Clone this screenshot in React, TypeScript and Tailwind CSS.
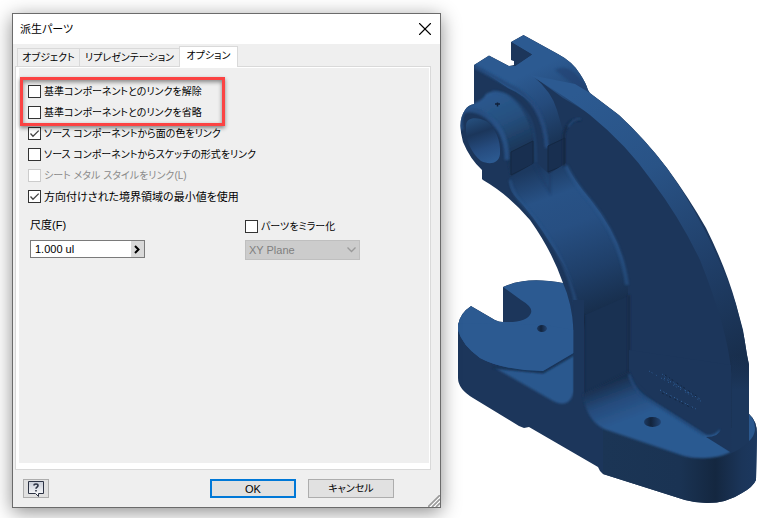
import { useState } from "react";
import { X } from "lucide-react";

const tabs = [
  { label: "オブジェクト", width: "w-[62px]" },
  { label: "リプレゼンテーション", width: "w-[100px]" },
  { label: "オプション", width: "w-[59px]" },
];

const options = [
  { label: "基準コンポーネントとのリンクを解除", checked: false },
  { label: "基準コンポーネントとのリンクを省略", checked: false },
  { label: "ソース コンポーネントから面の色をリンク", checked: true },
  { label: "ソース コンポーネントからスケッチの形式をリンク", checked: false },
  { label: "シート メタル スタイルをリンク(L)", checked: false, disabled: true },
  { label: "方向付けされた境界領域の最小値を使用", checked: true, size: "text-[11px]" },
];

type CheckProps = { label: string; checked?: boolean; disabled?: boolean; size?: string };

function Check({ label, checked = false, disabled = false, size = "text-[10px]" }: CheckProps) {
  return (
    <label
      className={`flex h-[21px] items-center gap-[3px] whitespace-nowrap ${size} ${disabled ? "text-[#8a8a8a]" : "text-black"}`}
    >
      <span className="grid shrink-0">
        <input
          type="checkbox"
          defaultChecked={checked}
          disabled={disabled}
          className="peer col-start-1 row-start-1 size-[13px] appearance-none border border-[#333] bg-white disabled:border-[#ccc]"
        />
        <svg
          viewBox="0 0 13 13"
          className="pointer-events-none invisible col-start-1 row-start-1 size-[13px] peer-checked:visible"
          aria-hidden="true"
        >
          <path d="M2.5 6.5 5 9.3l5.7-5.7" fill="none" stroke="#444" strokeWidth="1.3" />
        </svg>
      </span>
      {label}
    </label>
  );
}

function HelpIcon() {
  return (
    <svg viewBox="0 0 16 16" className="size-4" aria-hidden="true">
      <defs>
        <linearGradient id="bubble" x1="0" y1="0" x2="0" y2="1">
          <stop offset="0" stopColor="#c8cdd8" />
          <stop offset="1" stopColor="#fff" />
        </linearGradient>
      </defs>
      <path d="M.5.5h15v12h-5v3l-3-3h-7z" fill="url(#bubble)" stroke="#2c3344" />
      <path d="M6 4.5c0-2 4-2 4 0 0 1.6-2 1.6-2 3.3M8 9v1.6" fill="none" stroke="#2c3344" strokeWidth="1.6" />
    </svg>
  );
}

function Dialog() {
  const [active, setActive] = useState(2);

  return (
    <section
      role="dialog"
      aria-labelledby="dialog-title"
      className="relative flex min-w-[400px] flex-1 flex-col border border-[#6b6b6b] bg-[#efefef] text-black shadow-[0_4px_18px_rgba(0,0,0,0.45)]"
    >
      <header className="flex h-[30px] shrink-0 items-center justify-between bg-white pr-1 pl-[7px]">
        <h1 id="dialog-title">派生パーツ</h1>
        <button aria-label="閉じる">
          <X size={22} strokeWidth={1.2} />
        </button>
      </header>

      <div role="tablist" className="z-10 -mb-px ml-1 flex h-[23px] shrink-0 items-end text-[10px]">
        {tabs.map((tab, i) => (
          <button
            key={tab.label}
            role="tab"
            aria-selected={active === i}
            onClick={() => setActive(i)}
            className={`${tab.width} border-t border-l border-[#d9d9d9] whitespace-nowrap last:border-r ${
              active === i ? "h-[21px] bg-white pb-0.5" : "mb-px h-[18px]"
            }`}
          >
            {tab.label}
          </button>
        ))}
      </div>

      <div className="mr-[9px] ml-0.5 flex flex-1 border border-[#d9d9d9] bg-white pt-px pr-px pb-1.5 pl-[3px]">
        <div className="relative flex-1 bg-[#efefef] pt-[13px] pl-[9px]">
          {options.map((option) => (
            <Check key={option.label} {...option} />
          ))}
          <div className="mt-[9px] grid grid-cols-[215px_1fr] gap-y-[3px] pl-0.5">
            <label htmlFor="scale" className="flex h-[18px] items-center">尺度(F)</label>
            <Check label="パーツをミラー化" />
            <div className="flex h-[18px] w-[115px] border border-[#7a7a7a] bg-white">
              <input id="scale" defaultValue="1.000 ul" className="min-w-0 flex-1 px-1 outline-none" />
              <button aria-label="値の候補" className="flex w-[13px] items-center justify-center bg-[#d9d9d9]">
                <svg viewBox="0 0 7 9" className="h-[9px] w-[7px]" aria-hidden="true">
                  <path d="M1 1l3.5 3.5L1 8" fill="none" stroke="#000" strokeWidth="2" />
                </svg>
              </button>
            </div>
            <div className="grid w-[115px]">
              <select
                disabled
                aria-label="ミラー平面"
                className="col-start-1 row-start-1 h-5 appearance-none border border-[#bfbfbf] bg-[#ccc] px-[3px] text-[#7f7f7f] opacity-100"
              >
                <option>XY Plane</option>
              </select>
              <svg
                viewBox="0 0 9 6"
                className="pointer-events-none col-start-1 row-start-1 mr-1 h-1.5 w-[9px] self-center justify-self-end"
                aria-hidden="true"
              >
                <path d="M.5.5l4 4 4-4" fill="none" stroke="#9a9a9a" strokeWidth="1.3" />
              </svg>
            </div>
          </div>
          <div className="pointer-events-none absolute top-[9px] left-px h-[49px] w-[205px] border-3 border-[#fb4343] shadow-[0_2px_4px_rgba(0,0,0,0.45),inset_0_2px_4px_rgba(0,0,0,0.45)]" />
        </div>
      </div>

      <footer className="flex shrink-0 items-center gap-3 py-[9px] pr-[46px] pl-2.5">
        <button aria-label="ヘルプ" className="mr-auto flex h-[19px] w-[26px] items-center justify-center border border-[#adadad] bg-[#e1e1e1]">
          <HelpIcon />
        </button>
        <button className="h-[19px] w-[86px] border-2 border-[#0078d7] bg-[#e1e1e1] leading-[14px]">OK</button>
        <button className="h-[19px] w-[86px] border border-[#adadad] bg-[#e1e1e1] text-[10px] leading-4">キャンセル</button>
      </footer>
      <svg viewBox="0 0 12 12" className="absolute right-0 bottom-0 size-3" aria-hidden="true">
        <path d="M0 12 12 0M4 12l8-8M8 12l4-4" stroke="#9b9b9b" strokeWidth="1.6" />
        <path d="M2 12 12 2M6 12l6-6" stroke="#fff" strokeWidth="1" />
      </svg>
    </section>
  );
}

function Bracket() {
  return (
    <svg viewBox="457 34 300 470" className="mt-[21px] w-[300px] shrink-0 self-start" role="img" aria-label="ブラケットの3Dモデル">
      <defs>
        <linearGradient id="rim" gradientUnits="userSpaceOnUse" x1="580" y1="90" x2="745" y2="370">
          <stop offset="0" stopColor="#2c5a91" />
          <stop offset=".32" stopColor="#295386" />
          <stop offset=".65" stopColor="#203f69" />
          <stop offset="1" stopColor="#172c49" />
        </linearGradient>
        <linearGradient id="rimEnd" gradientUnits="userSpaceOnUse" x1="0" y1="355" x2="0" y2="390">
          <stop offset="0" stopColor="#1c375c" stopOpacity="0" />
          <stop offset="1" stopColor="#1c375c" />
        </linearGradient>
        <linearGradient id="web" gradientUnits="userSpaceOnUse" x1="545" y1="165" x2="600" y2="318">
          <stop offset="0" stopColor="#1c3960" />
          <stop offset=".2" stopColor="#285286" />
          <stop offset=".4" stopColor="#274f82" />
          <stop offset=".7" stopColor="#1f3f69" />
          <stop offset="1" stopColor="#162b47" />
        </linearGradient>
        <linearGradient id="collar" gradientUnits="userSpaceOnUse" x1="522" y1="76" x2="556" y2="145">
          <stop offset="0" stopColor="#2c5a91" />
          <stop offset=".45" stopColor="#254b7c" />
          <stop offset="1" stopColor="#193253" />
        </linearGradient>
        <linearGradient id="boss" gradientUnits="userSpaceOnUse" x1="495" y1="92" x2="523" y2="152">
          <stop offset="0" stopColor="#2b588e" />
          <stop offset=".45" stopColor="#26507f" />
          <stop offset="1" stopColor="#193253" />
        </linearGradient>
        <linearGradient id="bore" gradientUnits="userSpaceOnUse" x1="475" y1="116" x2="491" y2="162">
          <stop offset="0" stopColor="#26507f" />
          <stop offset=".35" stopColor="#1b365b" />
          <stop offset=".7" stopColor="#264c7f" />
          <stop offset="1" stopColor="#2c5a91" />
        </linearGradient>
        <linearGradient id="floor" gradientUnits="userSpaceOnUse" x1="600" y1="385" x2="615" y2="425">
          <stop offset="0" stopColor="#182e4d" />
          <stop offset=".5" stopColor="#254b7c" />
          <stop offset="1" stopColor="#2c5a91" />
        </linearGradient>
        <linearGradient id="base" gradientUnits="userSpaceOnUse" x1="603" y1="0" x2="757" y2="0">
          <stop offset="0" stopColor="#1b3555" />
          <stop offset=".5" stopColor="#1a3353" />
          <stop offset=".73" stopColor="#142740" />
          <stop offset=".9" stopColor="#1b3559" />
          <stop offset="1" stopColor="#1c385f" />
        </linearGradient>
        <linearGradient id="shadowHole" x1="0" y1="0" x2="1" y2="0">
          <stop offset="0" stopColor="#1d3a62" />
          <stop offset=".4" stopColor="#12233b" />
          <stop offset="1" stopColor="#224575" />
        </linearGradient>
        <filter id="soft" x="-20%" y="-20%" width="140%" height="140%">
          <feGaussianBlur stdDeviation="1.3" />
        </filter>
        <clipPath id="body">
          <path d="M523.5 35 558 54Q573 62 580 74 586 83 588 90L590 93 619 115Q645 139 667 168 689 198 706 228 726 268 736 304L743 330 747 355 749 365V414Q757 421 757 434L756 480Q753 487 742 493 727 503 707 503 696 503 685 500L603 474 600 471 598 467 529 427 524 428 519 426 473 398Q458 389 458 378V325Q460 313 471 306L495 320Q499 322 503 322V287Q526 276 563 283 552 251 530 220 509 195 483 180L482 179V170Q470 159 463 142 457 121 465 110 468 105 474 104V65L489 55.5 509 66 514 65V61L511 60V42Z" />
        </clipPath>
      </defs>

      <g clipPath="url(#body)">
        <rect x="457" y="34" width="300" height="470" fill="#1c365b" />

        {/* top of the lug and collar */}
        <path d="M474 65 489 55.5 509 66 515 66 532 54.500 511 42 523.5 35 558 54Q580 63 589 92L600 120 563 98 533 76Q552 92 557 110L565 138V165L548 172V148Q546 104 508 88Z" fill="url(#collar)" />
        <path d="M474 66 508 85Q544 100 547 148" fill="none" stroke="#254b7d" strokeWidth="4" filter="url(#soft)" />
        <path d="M555 70Q572 60 590 94L580 90Z" fill="#20416f" opacity=".6" filter="url(#soft)" />
        <path d="M511 42V60L515 61V66L532 54.500Z" fill="#1c365b" />

        {/* boss */}
        <path d="M464 111Q468 105 475 103 483 100 486 94 495 88 508 95 526 107 533 135V165L511 176 507 155Q502 126 484 113 474 106 464 111Z" fill="url(#boss)" filter="url(#soft)" />
        <path d="M492 91Q516 93 530 119 536 132 536 163" fill="none" stroke="#2a568b" strokeWidth="2" opacity=".4" filter="url(#soft)" />
        <path d="M461 130Q457 108 471 110 486 111 500 130 507 142 507 160" fill="none" stroke="#2a548a" strokeWidth="5" opacity=".8" filter="url(#soft)" />
        <path d="M466 126C466 116 478 117 486 121 495 127 501 140 500 154 499 164 489 165 481 161 472 154 465 140 466 126Z" fill="url(#bore)" />
        <path d="M495 104h5M497.500 102.500v4" stroke="#10213a" strokeWidth="1.5" />
        <path d="M511 152 533 141V164L511 175Z" fill="#182f50" stroke="#142843" />
        <path d="M548 146 565 138V165L548 172Z" fill="#182f50" stroke="#142843" />

        {/* curved web */}
        <path d="M509 178 536 162 549 174 566 163Q572 178 590 199 627 245 628 290V372L585 393V330Q581 288 552 246 534 216 514 195 508 188 509 178Z" fill="url(#web)" />
        <path d="M510 180Q513 195 525 207 569 257 577 310" fill="none" stroke="#295488" strokeWidth="3" opacity=".6" filter="url(#soft)" />
        <path d="M566 166Q575 184 592 203 622 242 627 285" fill="none" stroke="#2a568b" strokeWidth="4" opacity=".6" filter="url(#soft)" />
        <path d="M534 163Q543 181 550 192V174" fill="none" stroke="#1c3a64" strokeWidth="2" opacity=".5" filter="url(#soft)" />
        <path d="M585 315 628 296V372L585 393Z" fill="#193152" />
        <path d="M583.500 315V393M629 295V374" fill="none" stroke="#142843" strokeWidth="2" filter="url(#soft)" />
        <path d="M564 166V134Q568 118 581 120" fill="none" stroke="#142843" strokeWidth="2" filter="url(#soft)" />
        <path d="M568 127Q573 118 581 119" fill="none" stroke="#295286" strokeWidth="1.5" filter="url(#soft)" />

        {/* outer rim of the fin */}
        <path d="M530 75 575 84 590 93 619 115Q645 139 667 168 710 228 736 304L749 355V390H731.500V374Q728 330 700 260 680 218 652 181 627 145 590 115 568 98 530 75Z" fill="url(#rim)" />

        {/* left foot */}
        <path d="M458 323V330Q462 345 480 358 502 370 543 371L573.500 353V330Q572 303 563 283 526 276 503 287V322Q499 322 495 320L471 306Q460 313 458 323Z" fill="#2c5a91" />
        <path d="M503 287 521 300Q533 307 531 313 527 323 503 322Z" fill="#1c365b" />
        <path d="M495 368 543 373 574 355V391Q572 399 568 402 562 406 553 401Z" fill="#2b588e" filter="url(#soft)" />
        <path d="M492 367 543 372 574 354" fill="none" stroke="#193152" strokeWidth="2" filter="url(#soft)" />
        <path d="M458 323V330Q462 345 480 358 502 370 543 371L573.500 353V330L545 325Z" fill="#2c5a91" />
        <path d="M573.500 325V404H584V300H573Z" fill="#1c365b" />
        <path d="M578 308V390" stroke="#20416d" strokeWidth="2" filter="url(#soft)" />
        <ellipse cx="542" cy="328.500" rx="5" ry="3.500" fill="url(#shadowHole)" />

        {/* right foot */}
        <path d="M603 425 690 458 731 452V390H749V410H757V504H603Z" fill="url(#base)" />
        <path d="M629 372V350L731 365V452L690 440Z" fill="#1c365b" />
        <path d="M583 394 629 371Q633 389 646 397L704 434Q713 438 720 429 720 435 714 440L731 452Q711 462 684 456L604 429Q586 420 583 394Z" fill="url(#floor)" filter="url(#soft)" />
        <path d="M629 374Q634 392 650 401L704 435" fill="none" stroke="#244a7b" strokeWidth="2" filter="url(#soft)" />
        <path d="M706 437 732 453V428H722Q719 437 706 437Z" fill="#1c365b" />
        <path d="M731.500 355V453Q740 450 749 441V355Z" fill="url(#rimEnd)" />
        <path d="M735 392V448" stroke="#172e4d" strokeWidth="5" opacity=".4" filter="url(#soft)" />
        <path d="M749 414Q755 419 755 430 754 437 749 441Z" fill="#2b588e" />
        <ellipse cx="652.500" cy="422" rx="8.500" ry="5" fill="url(#shadowHole)" />

        {/* engraved lettering */}
        <g fill="none" strokeWidth="1">
          <path d="M649 371 704 403M662 374 690 394" stroke="#2c5a91" strokeDasharray="1 2 1 4 1 5" />
          <path d="M664 378 700 399M660 390 696 409" stroke="#356aa6" strokeDasharray="1 3 1 2 1 4" />
          <path d="M665 375 698 397M662 393 692 408" stroke="#12243e" strokeDasharray="2 3 1 2 2 4" />
        </g>
      </g>
    </svg>
  );
}

export default function App() {
  return (
    <main className="flex min-h-screen gap-4 overflow-hidden bg-white pt-[13px] pr-3.5 pb-2.5 pl-3 font-['Liberation_Sans','Noto_Sans_CJK_JP',sans-serif] text-[11px] leading-4 [font-feature-settings:'palt']">
      <Dialog />
      <Bracket />
    </main>
  );
}
